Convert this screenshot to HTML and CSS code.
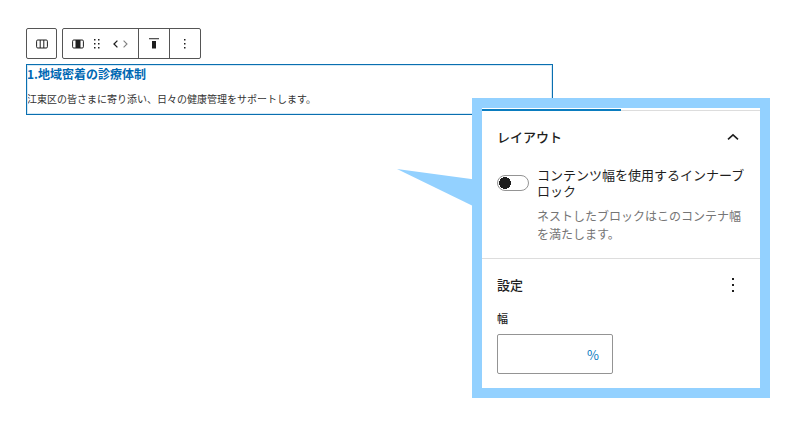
FILE: index.html
```html
<!DOCTYPE html>
<html lang="ja">
<head>
    <meta charset="UTF-8">
    <meta name="viewport" content="width=device-width, initial-scale=1.0">
    <title>ブロックのレイアウト設定</title>
    <link rel="stylesheet" href="styles.css">
</head>
<body>

<main class="editor">
    <div class="toolbar">
        <div class="toolbar-group">
            <button type="button" class="tool-button tool-parent" aria-label="親ブロックを選択">
                <svg width="12" height="10" viewBox="0 0 12 10" fill="none" stroke="#1e1e1e"><rect x="0.6" y="1" width="10.8" height="8" rx="1.2"/><path d="M4.2 1v8M7.8 1v8"/></svg>
            </button>
        </div>
        <div class="toolbar-group">
            <div class="toolbar-segment segment-block">
                <button type="button" class="tool-button" aria-label="カラム">
                    <svg width="12" height="10" viewBox="0 0 12 10"><rect x="0.6" y="1" width="10.8" height="8" rx="1.2" fill="none" stroke="#1e1e1e"/><path d="M3.5 1h5v8h-5z" fill="#1e1e1e"/></svg>
                </button>
                <button type="button" class="tool-button" aria-label="ドラッグ">
                    <svg width="6" height="10" viewBox="0 0 6 10" fill="#1e1e1e"><path d="M0 0h1.5v1.5H0zM4 0h1.5v1.5H4zM0 4h1.5v1.5H0zM4 4h1.5v1.5H4zM0 8h1.5v1.5H0zM4 8h1.5v1.5H4z"/></svg>
                </button>
                <span class="movers">
                    <button type="button" class="tool-button" aria-label="左に移動">
                        <svg width="5" height="8" viewBox="0 0 5 8" fill="none" stroke="#1e1e1e" stroke-width="1.3"><path d="M4.4.6 1 4l3.4 3.4"/></svg>
                    </button>
                    <button type="button" class="tool-button" aria-label="右に移動">
                        <svg width="5" height="8" viewBox="0 0 5 8" fill="none" stroke="#808080" stroke-width="1.1"><path d="M.6.6 4 4 .6 7.4"/></svg>
                    </button>
                </span>
            </div>
            <div class="toolbar-segment">
                <button type="button" class="tool-button tool-single" aria-label="上揃え">
                    <svg width="10" height="11" viewBox="0 0 10 11"><path d="M0 0h10v1.3H0z" fill="#555"/><path d="M3 3h4v7.5H3z" fill="#1e1e1e"/></svg>
                </button>
            </div>
            <div class="toolbar-segment">
                <button type="button" class="tool-button tool-single" aria-label="オプション">
                    <svg width="2" height="10" viewBox="0 0 2 10" fill="#1e1e1e"><path d="M0 0h1.5v1.5H0zM0 4h1.5v1.5H0zM0 8h1.5v1.5H0z"/></svg>
                </button>
            </div>
        </div>
    </div>

    <section class="block">
        <h2 class="block-title">1.地域密着の診療体制</h2>
        <p class="block-text">江東区の皆さまに寄り添い、日々の健康管理をサポートします。</p>
    </section>
</main>

<!-- Settings callout over the canvas -->
<aside class="callout">
    <svg class="callout-tail" width="76" height="38" viewBox="0 0 76 38"><path d="M0 0 76 10.2V37z" fill="#93d1ff"/></svg>
    <div class="tab-line">
        <div class="tab-line-active"></div>
    </div>

    <section class="panel">
        <div class="panel-header">
            <h2 class="panel-title">レイアウト</h2>
            <button type="button" class="icon-button" aria-label="レイアウトを閉じる">
                <svg width="12" height="8" viewBox="0 0 12 8" fill="none" stroke="#1e1e1e" stroke-width="1.6"><path d="M1 6.3 6 1.8l5 4.5"/></svg>
            </button>
        </div>
        <div class="toggle-row">
            <input type="checkbox" id="inner-width" class="toggle">
            <div class="toggle-texts">
                <label for="inner-width" class="toggle-label">コンテンツ幅を使用するインナーブロック</label>
                <p class="toggle-help">ネストしたブロックはこのコンテナ幅を満たします。</p>
            </div>
        </div>
    </section>

    <section class="panel panel-settings">
        <div class="panel-header">
            <h2 class="panel-title">設定</h2>
            <button type="button" class="icon-button" aria-label="設定のオプション">
                <svg width="2" height="14" viewBox="0 0 2 14" fill="#1e1e1e"><path d="M0 0h2v2H0zM0 6h2v2H0zM0 12h2v2H0z"/></svg>
            </button>
        </div>
        <label for="width" class="field-label">幅</label>
        <div class="unit-field">
            <input type="text" id="width" class="unit-input" inputmode="decimal">
            <button type="button" class="unit-button" aria-label="単位を選択">%</button>
        </div>
    </section>
</aside>

</body>
</html>
```

FILE: styles.css
```css
* {
    box-sizing: border-box;
}
body {
    margin: 0;
    min-height: 100vh;
    background-color: #fff;
    color: #1e1e1e;
    font-family: "Noto Sans CJK JP", sans-serif;
    position: relative;
}
h2, p {
    margin: 0;
}
button {
    padding: 0;
    border: 0;
    background: none;
    font-family: inherit;
    cursor: pointer;
}
svg {
    display: block;
}
.editor {
    padding: 28px 232px 0 26px;
}
.toolbar {
    display: flex;
    gap: 5px;
    margin-bottom: 5px;
}
.toolbar-group {
    display: flex;
    height: 31px;
    border: 1px solid #555;
    border-radius: 2px;
}
.toolbar-segment {
    display: flex;
    align-items: center;
}
.toolbar-segment + .toolbar-segment {
    border-left: 1px solid #555;
}
.segment-block {
    gap: 10px;
    padding: 0 10px 0 9px;
}
.tool-button {
    display: flex;
    align-items: center;
    justify-content: center;
    height: 29px;
}
.tool-parent {
    width: 29px;
}
.tool-single {
    width: 30px;
}
.movers {
    display: flex;
    gap: 5px;
    margin-left: 3px;
}
.block {
    height: 51px;
    border: 1px solid #0a6fb0;
    outline: 1px solid #d5e9f6;
    outline-offset: -2px;
}
.block-title {
    font-size: 12px;
    line-height: 18px;
    font-weight: 700;
    color: #0068b3;
}
.block-text {
    margin-top: 8px;
    font-size: 10px;
    line-height: 16px;
    color: #333;
}
.callout {
    position: absolute;
    top: 98px;
    right: 15px;
    width: 298px;
    padding-bottom: 14px;
    border: 10px solid #93d1ff;
    background-color: #fff;
}
.callout-tail {
    position: absolute;
    top: 61px;
    left: -85px;
}
.tab-line {
    display: flex;
    align-items: flex-end;
    height: 3px;
    background: linear-gradient(#ddd, #ddd) bottom / 100% 1px no-repeat;
}
.tab-line-active {
    width: 50%;
    height: 2px;
    background-color: #0a7cbf;
}
.panel {
    padding: 15px;
}
.panel-settings {
    padding-bottom: 0;
    border-top: 1px solid #ddd;
}
.panel-header {
    display: flex;
    align-items: center;
    justify-content: space-between;
}
.panel-title {
    font-size: 13px;
    line-height: 22px;
    font-weight: 500;
}
.icon-button {
    display: flex;
    align-items: center;
    justify-content: center;
    width: 24px;
    height: 22px;
}
.toggle-row {
    display: flex;
    gap: 8px;
    margin-top: 19px;
}
.toggle {
    flex: none;
    appearance: none;
    width: 32px;
    height: 16px;
    margin: 8px 0 0;
    border: 1px solid #949494;
    border-radius: 8px;
    background: radial-gradient(circle at 7px 7px, #1e1e1e 6px, #fff 6px);
    cursor: pointer;
}
.toggle:checked {
    border-color: #0a7cbf;
    background: radial-gradient(circle at 23px 7px, #fff 6px, #0a7cbf 6px);
}
.toggle-label {
    display: block;
    font-size: 13px;
    line-height: 16px;
}
.toggle-help {
    margin-top: 8px;
    font-size: 12px;
    line-height: 18px;
    color: #757575;
}
.field-label {
    display: block;
    margin-top: 14px;
    font-size: 11px;
    line-height: 16px;
    font-weight: 500;
}
.unit-field {
    display: flex;
    width: 116px;
    height: 40px;
    margin-top: 8px;
    border: 1px solid #949494;
    border-radius: 2px;
}
.unit-input {
    flex: 1;
    min-width: 0;
    padding: 0 8px;
    border: 0;
    outline: 0;
    background: none;
    font-family: inherit;
    font-size: 13px;
}
.unit-button {
    width: 38px;
    font-size: 13px;
    color: #0a7cbf;
}
```
